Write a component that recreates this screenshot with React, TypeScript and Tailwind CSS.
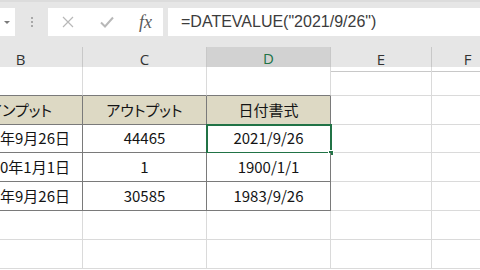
import React from "react";

const jp = "[font-family:'Noto_Sans_CJK_JP',sans-serif] [font-feature-settings:'palt']";

type Row = { h: string; cells: string[]; kind: "blank" | "top" | "head" | "data" };

const rows: Row[] = [
    { h: "h-[29px]", cells: ["", "", ""], kind: "top" },
    { h: "h-[29px]", cells: ["インプット", "アウトプット", "日付書式"], kind: "head" },
    { h: "h-[28px]", cells: ["2021年9月26日", "44465", "2021/9/26"], kind: "data" },
    { h: "h-[29px]", cells: ["1900年1月1日", "1", "1900/1/1"], kind: "data" },
    { h: "h-[29px]", cells: ["1983年9月26日", "30585", "1983/9/26"], kind: "data" },
    { h: "h-[29px]", cells: ["", "", ""], kind: "blank" },
    { h: "h-[29px]", cells: ["", "", ""], kind: "blank" },
];

function TableCell({ row, col, text, selected }: { row: Row; col: number; text: string; selected: boolean }) {
    const base = "relative flex items-center text-[15px] text-[#141414] " + jp;
    const align = col === 0 && row.kind === "data" ? " justify-end pr-[12px]" : " justify-center";
    let border = " border-r border-b border-[#dadada]";
    if (row.kind === "top") border = " border-r border-b border-r-[#dadada] border-b-[#7a7a7a]";
    if (row.kind === "head" || row.kind === "data") border = " border-r border-b border-[#7a7a7a]";
    const bg = row.kind === "head" ? " bg-[#ddd9c4]" : " bg-white";
    return (
        <div className={base + align + border + bg}>
            <span className="whitespace-nowrap">{text}</span>
            {selected && (
                <div className="absolute -left-[1px] -top-[1px] -right-[2px] -bottom-[2px] border-2 border-[#217346]">
                    <div className="absolute -right-[4px] -bottom-[4px] w-[6px] h-[6px] bg-[#217346] border border-white"></div>
                </div>
            )}
        </div>
    );
}

export default function App() {
    return (
        <div className="w-[480px] h-[270px] overflow-hidden bg-white flex flex-col">
            {/* formula bar */}
            <div className="h-[47px] shrink-0 bg-[#e6e6e6] border-t-2 border-[#dcdcdc] pt-[6px]">
                <div className="flex h-[28px]">
                    <div className="w-[15px] bg-white flex items-center pl-[4px]">
                        <div className="w-0 h-0 border-l-[3px] border-r-[3px] border-t-[3px] border-l-transparent border-r-transparent border-t-[#7a7a7a]"></div>
                    </div>
                    <div className="w-[33px] flex flex-col items-center justify-center gap-[2px]">
                        <div className="w-[2px] h-[2px] bg-[#a8a8a8]"></div>
                        <div className="w-[2px] h-[2px] bg-[#a8a8a8]"></div>
                        <div className="w-[2px] h-[2px] bg-[#a8a8a8]"></div>
                    </div>
                    <div className="w-[115px] bg-white flex items-center">
                        <svg className="ml-[14px]" width="12" height="12" viewBox="0 0 12 12">
                            <path d="M1 1 L11 11 M11 1 L1 11" stroke="#b8b8b8" strokeWidth="1.2" fill="none" />
                        </svg>
                        <svg className="ml-[26px]" width="14" height="12" viewBox="0 0 14 12">
                            <path d="M1 6.5 L5 10.5 L13 1.5" stroke="#b8b8b8" strokeWidth="2" fill="none" />
                        </svg>
                        <span className="ml-[25px] text-[18px] italic text-[#5a5a5a] leading-none [font-family:'Liberation_Serif',serif]">fx</span>
                    </div>
                    <div className="ml-[5px] flex-1 bg-white flex items-center pl-[13px] text-[16px] text-[#3c3c3c] whitespace-nowrap [font-family:'Liberation_Sans',sans-serif]">
                        =DATEVALUE("2021/9/26")
                    </div>
                </div>
            </div>

            {/* column headers */}
            <div className="ml-[-41px] grid grid-cols-[124px_124px_124px_101px_72px] h-[20px] shrink-0 bg-[#e6e6e6] text-[15px] text-[#333] [font-family:'Open_Sans',sans-serif]">
                <div className="flex items-center justify-center border-r border-b border-[#c8c8c8]">B</div>
                <div className="flex items-center justify-center border-r border-b border-[#c8c8c8]">C</div>
                <div className="flex items-center justify-center border-r border-b-2 border-r-[#c8c8c8] border-b-[#217346] bg-[#d2d2d2] text-[#217346]">D</div>
                <div className="flex items-center justify-center border-r border-b border-[#c8c8c8]">E</div>
                <div className="flex items-center justify-center border-r border-b border-[#c8c8c8]">F</div>
            </div>

            {/* sheet body */}
            {rows.map((row, ri) => (
                <div key={ri} className={"ml-[-41px] grid grid-cols-[124px_124px_124px_101px_72px] shrink-0 " + row.h}>
                    {row.cells.map((t, ci) => (
                        <TableCell key={ci} row={row} col={ci} text={t} selected={ri === 2 && ci === 2} />
                    ))}
                    <div className="border-r border-b border-[#dadada]"></div>
                    <div className="border-r border-b border-[#dadada]"></div>
                </div>
            ))}
        </div>
    );
}
